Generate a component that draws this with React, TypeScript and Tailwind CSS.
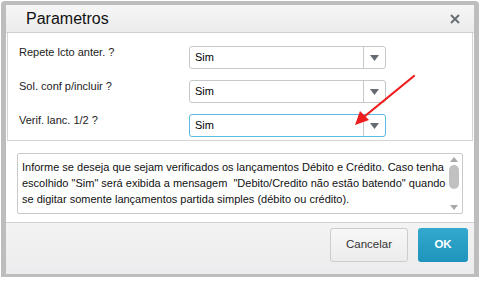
import React from 'react';

const rows = [
  { label: 'Repete lcto anter. ?', value: 'Sim', focused: false },
  { label: 'Sol. conf p/incluir ?', value: 'Sim', focused: false },
  { label: 'Verif. lanc. 1/2 ?', value: 'Sim', focused: true },
];

const help = [
  'Informe se deseja que sejam verificados os lançamentos Débito e Crédito. Caso tenha',
  'escolhido "Sim" será exibida a mensagem\u00a0 "Debito/Credito não estão batendo" quando',
  'se digitar somente lançamentos partida simples (débito ou crédito).',
];

function Select({ value, focused }: { value: string; focused: boolean }) {
  return (
    <div
      className={`flex h-[23px] w-[197px] items-stretch rounded-[3px] border bg-white ${
        focused ? 'border-[#5bbbe0]' : 'border-[#c8c8c8]'
      }`}
    >
      <div className="flex flex-1 items-center pl-[5px] text-[11px] text-black">{value}</div>
      <div className="flex w-[22px] items-center justify-center border-l border-[#c8c8c8]">
        <svg width="9" height="6" viewBox="0 0 9 6">
          <path d="M0 0 H9 L4.5 6 Z" fill="#666b73" />
        </svg>
      </div>
    </div>
  );
}

export default function App() {
  return (
    <div className="relative h-[281px] w-[482px] bg-white font-['Liberation_Sans',Arial,sans-serif]">
      <div className="ml-[1px] mt-[1px] flex h-[276px] w-[478px] flex-col rounded-t-[4px] bg-[#bdbdbd] px-[5px] pb-[3px] pt-[4px]">
        {/* Header */}
        <div className="flex h-[28px] items-center justify-between border-b border-[#cfcfcf] bg-gradient-to-b from-[#f6f6f6] to-[#ececec] pl-[20px] pr-[14px]">
          <span className="text-[16px] text-[#111]">Parametros</span>
          <svg width="10" height="10" viewBox="0 0 10 10">
            <path d="M1 1 L9 9 M9 1 L1 9" stroke="#6b6f76" strokeWidth="2" />
          </svg>
        </div>

        {/* Body */}
        <div className="flex flex-1 flex-col bg-white">
          <div className="mx-[1px] border-x border-b border-[#d4d4d4] pb-[3px] pl-[11px] pt-[13px]">
            {rows.map((r, i) => (
              <div key={i} className="mb-[11px] flex items-start last:mb-0">
                <div className="w-[170px] text-[11px] leading-[13px] text-[#222]">{r.label}</div>
                <Select value={r.value} focused={r.focused} />
              </div>
            ))}
          </div>

          <div className="px-[11px] pb-[8px] pt-[12px]">
            <div className="flex h-[61px] overflow-hidden rounded-[2px] border border-[#cacaca] bg-white">
              <div className="flex-1 pl-[4px] pt-[5px] text-[11px] leading-[16px] text-[#111]">
                {help.map((l, i) => (
                  <div key={i} className="whitespace-nowrap">{l}</div>
                ))}
              </div>
              <div className="flex w-[16px] flex-col items-center justify-between py-[3px]">
                <svg width="8" height="5" viewBox="0 0 8 5">
                  <path d="M0 5 L4 0 L8 5 Z" fill="#a8a8a8" />
                </svg>
                <div className="h-[24px] w-[10px] rounded-[5px] bg-[#c1c1c1]" />
                <div className="h-[10px]" />
                <svg width="8" height="5" viewBox="0 0 8 5">
                  <path d="M0 0 L8 0 L4 5 Z" fill="#a8a8a8" />
                </svg>
              </div>
            </div>
          </div>

          {/* Footer */}
          <div className="flex flex-1 items-start justify-end gap-[10px] border-t border-[#d0d0d0] bg-gradient-to-b from-[#f3f3f3] to-[#ececee] pr-[6px] pt-[5px]">
            <button className="h-[34px] w-[78px] rounded-[3px] border border-[#cccccc] bg-gradient-to-b from-[#f7f7f7] to-[#ececec] text-[11.5px] text-[#333]">
              Cancelar
            </button>
            <button className="h-[34px] w-[50px] rounded-[3px] bg-gradient-to-b from-[#33a9cf] to-[#1e94bc] text-[11.5px] font-bold text-white">
              OK
            </button>
          </div>
        </div>
      </div>

      {/* Red annotation arrow */}
      <svg className="pointer-events-none absolute left-0 top-0" width="482" height="281" viewBox="0 0 482 281">
        <path d="M414 75 L365 115" stroke="#ee1c1c" strokeWidth="2.2" strokeLinecap="round" />
        <path d="M355 124 L360 110 L369 119 Z" fill="#ee1c1c" />
      </svg>
    </div>
  );
}
